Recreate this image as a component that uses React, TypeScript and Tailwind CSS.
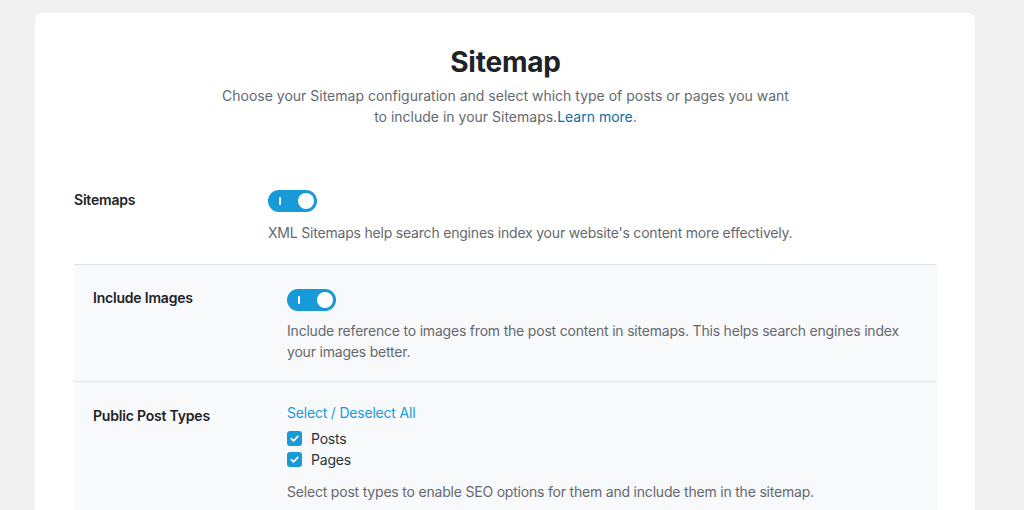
const font = { fontFamily: "Inter, 'Liberation Sans', sans-serif", letterSpacing: "-0.2px" };

function Toggle() {
  return (
    <div className="relative flex h-[22px] w-[49px] items-center justify-between rounded-full bg-[#189ad9] pl-[11px] pr-[3px]">
      <span className="h-[8px] w-[2px] rounded-sm bg-white" />
      <span className="h-[16px] w-[16px] rounded-full bg-white" />
    </div>
  );
}

function Checkbox({ label }: { label: string }) {
  return (
    <label className="flex items-center gap-[9px] text-[14px] leading-[21px] text-[#2c3338]">
      <span className="flex h-[15px] w-[15px] items-center justify-center rounded-[3px] bg-[#189ad9]">
        <svg width="11" height="11" viewBox="0 0 12 12" fill="none">
          <path d="M2.5 6.2 5 8.6 9.6 3.6" stroke="white" strokeWidth="1.9" strokeLinecap="round" strokeLinejoin="round" />
        </svg>
      </span>
      {label}
    </label>
  );
}

export default function App() {
  return (
    <div className="h-[510px] overflow-hidden bg-[#f0f0f1] pl-[35px] pt-[13px]" style={font}>
      <div className="h-[600px] w-[940px] rounded-[6px] bg-white pl-[39px] pr-[38px] pt-[32px]">
        <div className="text-center">
          <h1 className="text-[28px] font-bold leading-[34px] text-[#1d2327]">Sitemap</h1>
          <p className="mx-auto mt-[6px] w-[575px] text-[14px] leading-[21px] tracking-normal text-[#646970]">
            Choose your Sitemap configuration and select which type of posts or pages you want to include in your
            Sitemaps.<a className="text-[#0a6fa8]">Learn more</a>.
          </p>
        </div>

        <div className="mt-[63px] flex border-b border-[#e2e4e7] pb-[21px]">
          <div className="w-[194px] pt-[1px] text-[14px] font-semibold leading-[18px] text-[#1d2327]">Sitemaps</div>
          <div className="flex-1">
            <Toggle />
            <p className="mt-[10px] text-[14px] leading-[21px] text-[#646970]">
              XML Sitemaps help search engines index your website's content more effectively.
            </p>
          </div>
        </div>

        <div className="flex border-b border-[#e2e4e7] bg-[#f8f9fb] px-[19px] pt-[24px] pb-[19px]">
          <div className="w-[194px] text-[14px] font-semibold leading-[18px] text-[#1d2327]">Include Images</div>
          <div className="flex-1">
            <Toggle />
            <p className="mt-[9px] w-[615px] text-[14px] leading-[21px] text-[#646970]">
              Include reference to images from the post content in sitemaps. This helps search engines index your
              images better.
            </p>
          </div>
        </div>

        <div className="flex bg-[#f8f9fb] px-[19px] pt-[22px] pb-[19px]">
          <div className="w-[194px] pt-[3px] text-[14px] font-semibold leading-[18px] text-[#1d2327]">Public Post Types</div>
          <div className="flex-1 pt-[2px]">
            <a className="block text-[14px] leading-[14px] text-[#189ad9]">Select / Deselect All</a>
            <div className="mt-[8px] flex flex-col">
              <Checkbox label="Posts" />
              <Checkbox label="Pages" />
            </div>
            <p className="mt-[11px] text-[14px] leading-[21px] text-[#646970]">
              Select post types to enable SEO options for them and include them in the sitemap.
            </p>
          </div>
        </div>
      </div>
    </div>
  );
}
